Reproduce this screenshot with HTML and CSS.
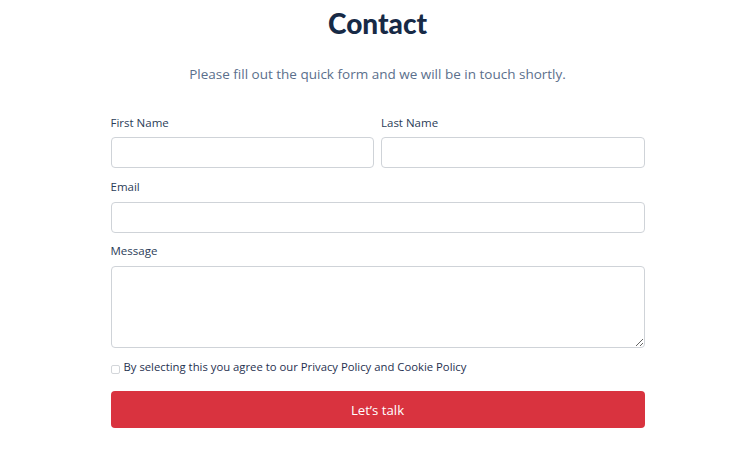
FILE: index.html
```html
<!DOCTYPE html>
<html lang="en">
<head>
    <meta charset="UTF-8">
    <meta name="viewport" content="width=device-width, initial-scale=1.0">
    <title>Contact</title>
    <link rel="stylesheet" href="styles.css">
</head>
<body>
    <div class="container">
        <h1>Contact</h1>
        <p class="intro">Please fill out the quick form and we will be in touch shortly.</p>
        <form class="form">
            <div class="row">
                <div class="field">
                    <label for="first">First Name</label>
                    <input type="text" id="first">
                </div>
                <div class="field">
                    <label for="last">Last Name</label>
                    <input type="text" id="last">
                </div>
            </div>
            <div class="field">
                <label for="email">Email</label>
                <input type="email" id="email">
            </div>
            <div class="field">
                <label for="message">Message</label>
                <textarea id="message"></textarea>
            </div>
            <label class="agree">
                <input type="checkbox">
                <span>By selecting this you agree to our Privacy Policy and Cookie Policy</span>
            </label>
            <button type="button" class="button">Let’s talk</button>
        </form>
    </div>
</body>
</html>
```

FILE: styles.css
```css
body {
    background-color: white;
    font-family: "Open Sans", Lato, sans-serif;
    margin: 0;
    padding-left: 3px;
}
.container {
    width: 534px;
    margin: 0 auto;
    padding-top: 7px;
}
h1 {
    color: #172a46;
    font-family: Lato, sans-serif;
    font-size: 28px;
    font-weight: 900;
    text-align: center;
    margin: 0;
    line-height: 32px;
}
.intro {
    color: #5b6f8c;
    font-size: 13.5px;
    text-align: center;
    margin: 26px 0 33px;
    line-height: 18px;
}
.form {
    display: flex;
    flex-direction: column;
}
.row {
    display: flex;
    gap: 7px;
}
.row .field {
    flex: 1;
    margin-bottom: 12px;
}
.field {
    display: flex;
    flex-direction: column;
    margin-bottom: 11px;
}
label {
    color: #2b3d58;
    font-size: 11.5px;
    line-height: 14px;
    margin-bottom: 8px;
}
.row label {
    margin-bottom: 7px;
}
input[type="text"],
input[type="email"],
textarea {
    box-sizing: border-box;
    height: 31px;
    border: 1px solid #cfd3d8;
    border-radius: 4px;
    padding: 6px 10px;
    font-family: inherit;
    margin: 0;
}
textarea {
    height: 82px;
    resize: vertical;
}
.agree {
    display: flex;
    align-items: center;
    gap: 4px;
    margin: 1px 0 17px;
    font-size: 11.3px;
    line-height: 14px;
    color: #1f3150;
}
.agree input {
    appearance: none;
    width: 9px;
    height: 9px;
    margin: 4px 0 0;
    border: 1px solid #d3d6da;
    border-radius: 2px;
}
.button {
    background-color: #d9333f;
    color: white;
    border: none;
    border-radius: 4px;
    height: 37px;
    font-family: inherit;
    font-size: 13.2px;
    cursor: pointer;
}
```
